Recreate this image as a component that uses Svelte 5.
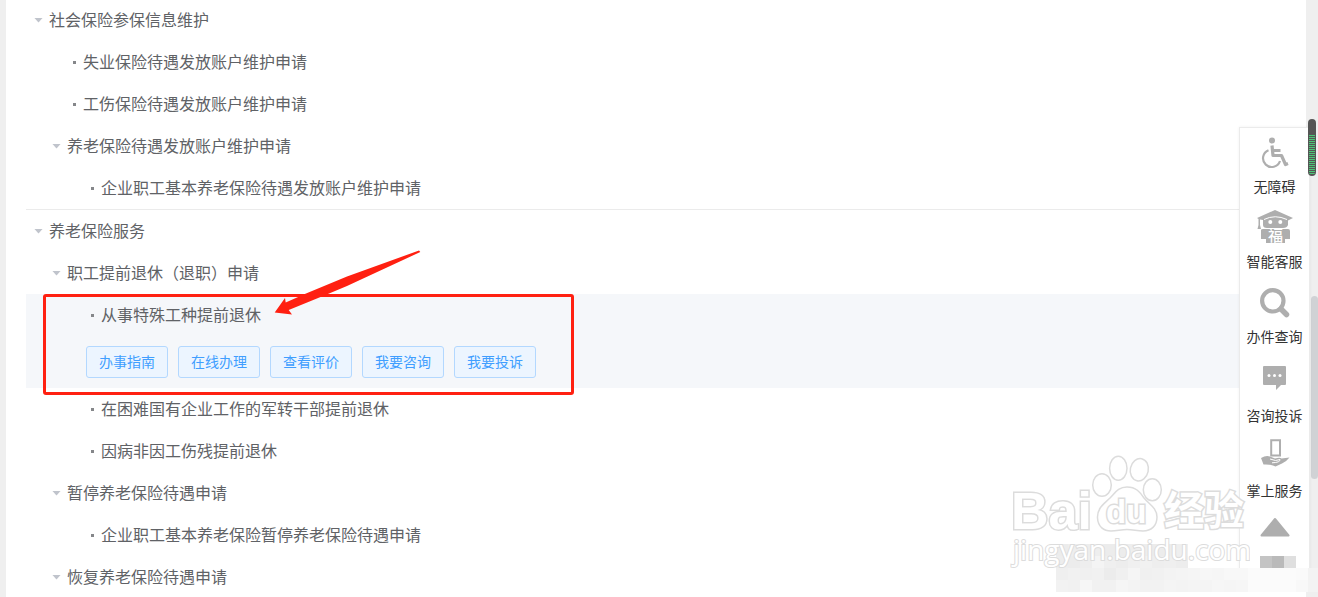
<script>
  const actions = ['办事指南', '在线办理', '查看评价', '我要咨询', '我要投诉'];

  const groups = [
    [
      { level: 0, branch: true, name: '社会保险参保信息维护' },
      { level: 1, name: '失业保险待遇发放账户维护申请' },
      { level: 1, name: '工伤保险待遇发放账户维护申请' },
      { level: 1, branch: true, name: '养老保险待遇发放账户维护申请' },
      { level: 2, name: '企业职工基本养老保险待遇发放账户维护申请' }
    ],
    [
      { level: 0, branch: true, name: '养老保险服务' },
      { level: 1, branch: true, name: '职工提前退休（退职）申请' },
      { level: 2, name: '从事特殊工种提前退休', active: true },
      { level: 2, name: '在困难国有企业工作的军转干部提前退休' },
      { level: 2, name: '因病非因工伤残提前退休' },
      { level: 1, branch: true, name: '暂停养老保险待遇申请' },
      { level: 2, name: '企业职工基本养老保险暂停养老保险待遇申请' },
      { level: 1, branch: true, name: '恢复养老保险待遇申请' }
    ]
  ];

  const tools = [
    { icon: 'wheelchair', name: '无障碍' },
    { icon: 'robot', name: '智能客服' },
    { icon: 'search', name: '办件查询' },
    { icon: 'chat', name: '咨询投诉', spaced: true },
    { icon: 'phone', name: '掌上服务', spaced: true }
  ];

  // shades of the pixelated patch, one row per line of blocks
  const blocks = [
    ['#ececec', '#eeeeee', '#ededed', '#eeeeee', '#ececec', '#ececec', '#eeeeee', '#ededed', '#ececec', '#ededed', '#efefef'],
    ['#ededed', '#ececec', '#eeeeee', '#f4f4f4', '#efefef', '#ededed', '#f0f0f0', '#f1f1f1', '#eeeeee', '#efefef', '#ededed'],
    ['#efefef', '#f1f1f1', '#f0f0f0', '#f1f1f1', '#ececec', '#f0f0f0', '#f5f5f5', '#f0f0f0', '#f1f1f1', '#f3f3f3', '#f4f4f4', '#f5f5f5', '#f7f7f7', '#f6f6f6', '#f8f8f8', '#f8f8f8', '#fbfbfb', '#fbfbfb', '#fbfbfb', '#fbfbfb', '#fafafa', '#f3f3f3'],
    ['#f2f2f2', '#f1f1f1', '#f6f6f6', '#f1f1f1', '#f1f1f1', '#f5f5f5', '#f3f3f3', '#f2f2f2', '#f2f2f2', '#f4f4f4', '#f3f3f3', '#f4f4f4', '#f4f4f4', '#f6f6f6', '#f5f5f5', '#f6f6f6', '#fbfbfb', '#fbfbfb', '#fbfbfb', '#fbfbfb', '#f8f8f8', '#f3f3f3']
  ];
</script>

<div class="page">
  <main class="content">
    {#each groups as group}
      <ul class="group">
        {#each group as node}
          <li class="node level-{node.level}" class:active={node.active}>
            <div class="node-label">
              {#if node.branch}
                <button class="toggle" aria-label={node.name}></button>
              {:else}
                <span class="dot"></span>
              {/if}
              <span class="node-name">{node.name}</span>
            </div>
            {#if node.active}
              <div class="actions">
                {#each actions as action}
                  <button class="action">{action}</button>
                {/each}
              </div>
              <div class="mark"></div>
              <svg class="mark-arrow" width="150" height="68" viewBox="272 249 150 68" aria-hidden="true">
                <path d="M274.7 312.5L285 298L285.7 302.5L306 293.5L347 276.5L419 250.5L420.3 252L347 286L326.7 294.5L288.7 310L292 314.5Z" fill="#ff2011" />
              </svg>
            {/if}
          </li>
        {/each}
      </ul>
    {/each}
  </main>

  <div class="scroll-thumb"></div>

  <nav class="sidebar">
    {#each tools as tool}
      <a class="tool" class:spaced={tool.spaced} href="#{tool.icon}">
        <svg width="40" height="40" viewBox="0 0 40 40" fill="#aeaeae" aria-hidden="true">
          {#if tool.icon === 'wheelchair'}
            <circle cx="17" cy="7.6" r="3" />
            <path d="M17 12.5L18 22.5H26.5L30.5 31.5L33 30.5M18 17.5H25.5" fill="none" stroke="#aeaeae" stroke-width="3.2" stroke-linejoin="round" />
            <path d="M13.5 17.2A8.7 8.7 0 1 0 25 28" fill="none" stroke="#aeaeae" stroke-width="2.2" />
          {:else if tool.icon === 'robot'}
            <path d="M2 10L20 2L38 10L33 12.5V17Q32 20 28 20H12Q8 20 8 17V12L5 11.5V17L6 21H2.5L3.5 17V11Z" />
            <path d="M6 22Q6 21 8 21H33Q35 21 35 23V31H30V35H11V31H6Z" />
            <path d="M9 11.5Q20 6 32 11.5" fill="none" stroke="#fff" stroke-width="1" />
            <circle cx="15.3" cy="14" r="2" fill="#fff" />
            <circle cx="25.3" cy="14" r="2" fill="#fff" />
            <text class="fu" x="13" y="33" font-size="15" fill="#fff">福</text>
          {:else if tool.icon === 'search'}
            <circle cx="17.8" cy="17.8" r="10.7" fill="none" stroke="#aeaeae" stroke-width="4.2" />
            <path d="M26 26L31.5 31.5" stroke="#aeaeae" stroke-width="5.5" stroke-linecap="round" />
          {:else if tool.icon === 'chat'}
            <path d="M9 8H30Q31 8 31 9V26Q31 27 30 27H26L21 32V27H9Q8 27 8 26V9Q8 8 9 8Z" />
            <g fill="#fff">
              <circle cx="14" cy="17.5" r="1.5" />
              <circle cx="19.5" cy="17.5" r="1.5" />
              <circle cx="25" cy="17.5" r="1.5" />
            </g>
          {:else}
            <path d="M16.2 22.5V7.2H25V22.5Z" fill="none" stroke="#aeaeae" stroke-width="2" />
            <path d="M6 25Q11 22 15 23.5L20 25.5Q25 24 26.5 25.5L34.5 24.5Q31 29 27 30.5L20.5 33.5Q16 31 8.5 31.5Z" />
            <path d="M15 26L20.5 27.5L25 26.5Q25.5 29.5 17 29.8" fill="none" stroke="#fff" stroke-width="1" />
          {/if}
        </svg>
        <span>{tool.name}</span>
      </a>
    {/each}
    <button class="to-top" aria-label="返回顶部">
      <svg width="32" height="20" viewBox="0 0 32 20" aria-hidden="true">
        <path d="M16 2L29.5 18.5H2.5Z" fill="#aeaeae" stroke="#aeaeae" stroke-width="2" stroke-linejoin="round" />
      </svg>
    </button>
    <div class="shades"><i></i><i></i><i></i></div>
  </nav>

  <svg class="mosaic" width="264" height="48" viewBox="0 0 264 48" shape-rendering="crispEdges" aria-hidden="true">
    {#each blocks as row, y}
      {#each row as shade, x}
        <rect x={x * 12} y={y * 12} width="12" height="12" fill={shade} />
      {/each}
    {/each}
  </svg>

  <div class="meter"></div>

  <svg class="watermark" width="240" height="120" viewBox="0 0 240 120" aria-hidden="true">
    <g fill="#fff" stroke="#dcdcdc" stroke-width="1.5">
      <ellipse cx="92" cy="35" rx="9.3" ry="11.3" />
      <ellipse cx="108.3" cy="18.3" rx="8.7" ry="12" />
      <ellipse cx="129.3" cy="19.7" rx="9" ry="11.3" transform="rotate(12 129.3 19.7)" />
      <ellipse cx="142.3" cy="39.7" rx="9" ry="11" />
      <path d="M117 37C108 37 105 43 100 48C94 54 87 58 87.5 68C88 77 94 81 101 81C107 81 111 79.5 117 79.5C123 79.5 127 81 133 81C141 81 147 76 147 67C147 58 139 54 134 48C130 42 126 37 117 37Z" />
      <g class="outline">
        <text x="1" y="79" font-size="52">Bai</text>
        <text x="96" y="73" font-size="33">du</text>
        <text x="154" y="75" font-size="40">经验</text>
      </g>
      <text class="outline url" x="3" y="110" font-size="28">jingyan.baidu.com</text>
    </g>
  </svg>
</div>

<style>
  :global(body) {
    margin: 0;
    background: #efefef;
  }

  .page {
    position: relative;
    display: flex;
    height: 100vh;
    padding: 0 12px 0 6px;
    box-sizing: border-box;
    overflow: hidden;
    font-family: "Noto Sans CJK SC", sans-serif;
    font-size: 16px;
    font-weight: 400;
    color: #606266;
  }

  .content {
    flex: 1;
    height: max-content;
    min-height: 100vh;
    margin-top: -1px;
    padding: 0 20px;
    background: #fff;
  }

  .group {
    margin: 0;
    padding: 0;
    list-style: none;
  }

  .group + .group {
    border-top: 1px solid #ebebeb;
  }

  .node {
    position: relative;
  }

  .node-label {
    display: flex;
    align-items: center;
    height: 42px;
    white-space: nowrap;
  }

  .node-name {
    padding-bottom: 2px;
  }

  .level-0 .node-label {
    padding-left: 8px;
  }

  .level-1 .node-label {
    padding-left: 26px;
  }

  .level-2 .node-label {
    padding-left: 44px;
  }

  .toggle {
    width: 9px;
    height: 5px;
    margin: 0 6px 0 0;
    padding: 0;
    border: 0;
    background: #c0c4cc;
    clip-path: polygon(0 0, 100% 0, 50% 100%);
  }

  .dot {
    width: 3px;
    height: 3px;
    margin: 0 7px 0 21px;
    background: #85878a;
  }

  .active {
    background: #f5f7fa;
  }

  .actions {
    display: flex;
    gap: 10px;
    padding: 10px 0 10px 60px;
  }

  .action {
    width: 82px;
    height: 32px;
    padding: 0 0 2px;
    border: 1px solid #b3d8ff;
    border-radius: 3px;
    background: #ecf5ff;
    box-sizing: border-box;
    font: inherit;
    font-size: 14px;
    line-height: 28px;
    color: #409eff;
    white-space: nowrap;
  }

  .mark {
    position: absolute;
    top: 0;
    left: 17px;
    width: 531px;
    height: 101px;
    border: 3px solid #ff2011;
    border-radius: 3px;
    box-sizing: border-box;
    z-index: 1;
  }

  .mark-arrow {
    position: absolute;
    top: -45px;
    left: 246px;
    z-index: 1;
  }

  .sidebar {
    position: absolute;
    top: 127px;
    right: 8px;
    display: flex;
    flex-direction: column;
    align-items: center;
    width: 71px;
    padding-bottom: 10px;
    border: 1px solid #ebebeb;
    border-bottom: 0;
    background: #fff;
    box-sizing: border-box;
    box-shadow: 0 0 3px rgba(0, 0, 0, 0.06);
  }

  .tool {
    display: flex;
    flex-direction: column;
    align-items: center;
    gap: 3px;
    height: 75px;
    padding-top: 5px;
    box-sizing: border-box;
    font-size: 14px;
    line-height: 20px;
    color: #333;
    text-decoration: none;
    white-space: nowrap;
  }

  .tool svg {
    flex: none;
  }

  .spaced {
    gap: 7px;
  }

  .fu {
    font-weight: 500;
  }

  .to-top {
    margin: 14px 0 19px;
    padding: 0;
    border: 0;
    background: none;
    line-height: 0;
  }

  .shades {
    display: flex;
    padding-left: 6px;
  }

  .shades i {
    width: 12px;
    height: 12px;
    background: #c4c4c4;
  }

  .shades i:nth-child(2) {
    background: #bababa;
  }

  .shades i:nth-child(3) {
    background: #dfdfdf;
  }

  .scroll-thumb {
    position: absolute;
    top: 296px;
    right: 0;
    width: 7px;
    height: 183px;
    border-radius: 4px;
    background: #d0d2d5;
  }

  .meter {
    position: absolute;
    top: 119px;
    right: 2px;
    width: 8px;
    height: 57px;
    border: 1px solid #555;
    border-top-width: 16px;
    border-radius: 4px;
    box-sizing: border-box;
    background: repeating-linear-gradient(#4cc777 0 1px, #555 1px 2px);
  }

  .mosaic {
    position: absolute;
    right: -2px;
    bottom: 5px;
  }

  .watermark {
    position: absolute;
    right: 68px;
    bottom: 27px;
  }

  .outline {
    font-family: "Liberation Sans", "Noto Sans CJK SC", sans-serif;
    font-weight: 700;
    stroke-width: 3;
    paint-order: stroke;
  }

  .url {
    font-family: "Open Sans", sans-serif;
    font-weight: 400;
    stroke-width: 2;
  }
</style>
